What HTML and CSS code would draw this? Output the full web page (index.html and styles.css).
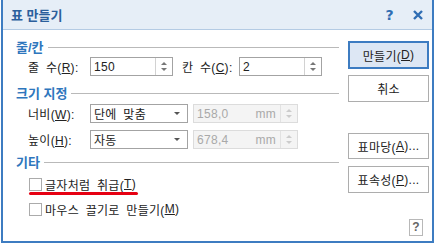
FILE: index.html
```html
<!DOCTYPE html>
<html>
<head>
    <title>표 만들기</title>
    <link rel="stylesheet" href="styles.css">
</head>
<body>
    <div class="dialog">
        <div class="titlebar">
            <span class="title">표 만들기</span>
            <span class="tb-help">?</span>
            <span class="tb-close">
                <svg width="10" height="10" viewBox="0 0 10 10"><path d="M1 1L9 9M9 1L1 9" stroke="#2f6db3" stroke-width="2.4"/></svg>
            </span>
        </div>
        <div class="content">
            <div class="form">
                <div class="sec" id="sec1"><span>줄/칸</span><i></i></div>
                <div class="row" id="row1">
                    <label class="lbl w62">줄 수(<u>R</u>):</label>
                    <div class="spin w83"><span class="val">150</span><span class="arrows"></span></div>
                    <label class="lbl w57 ml9">칸 수(<u>C</u>):</label>
                    <div class="spin w83"><span class="val">2</span><span class="arrows"></span></div>
                </div>

                <div class="sec" id="sec2"><span>크기 지정</span><i></i></div>
                <div class="row" id="row2">
                    <label class="lbl w62">너비(<u>W</u>):</label>
                    <div class="select"><span class="val">단에 맞춤</span><span class="caret"></span></div>
                    <div class="spin off"><span class="val">158,0</span><span class="unit">mm</span><span class="arrows"></span></div>
                </div>
                <div class="row" id="row3">
                    <label class="lbl w62">높이(<u>H</u>):</label>
                    <div class="select"><span class="val">자동</span><span class="caret"></span></div>
                    <div class="spin off"><span class="val">678,4</span><span class="unit">mm</span><span class="arrows"></span></div>
                </div>

                <div class="sec" id="sec3"><span>기타</span><i></i></div>
                <div class="check marked" id="chk1"><span class="box"></span>글자처럼 취급(<u>T</u>)</div>
                <div class="check" id="chk2"><span class="box"></span>마우스 끌기로 만들기(<u>M</u>)</div>
            </div>
            <div class="side">
                <div class="btn default" id="b1">만들기(<u>D</u>)</div>
                <div class="btn" id="b2">취소</div>
                <div class="btn" id="b3">표마당(<u>A</u>)...</div>
                <div class="btn" id="b4">표속성(<u>P</u>)...</div>
                <div class="help">?</div>
            </div>
        </div>
    </div>
</body>
</html>
```

FILE: styles.css
```css
body {
    margin: 0;
    width: 440px;
    height: 245px;
    background: #fff;
    font-family: "Liberation Sans", "Noto Sans CJK KR", sans-serif;
    font-size: 12px;
    letter-spacing: 0.3px;
    word-spacing: 3px;
    color: #222;
    overflow: hidden;
}

u {
    text-decoration: underline;
    text-underline-offset: 1px;
}

.dialog {
    margin-left: 1px;
    width: 429px;
    height: 241px;
    border: 2px solid #3d7cc1;
    border-top: none;
    display: flex;
    flex-direction: column;
}

.titlebar {
    height: 29px;
    background: #e6eef7;
    border-bottom: 1px solid #b4cbe4;
    display: flex;
    align-items: center;
}
.title {
    margin-left: 8px;
    font-size: 13px;
    font-weight: bold;
    letter-spacing: 0;
    word-spacing: 0;
    color: #2b5f9c;
    flex: 1;
}
.tb-help {
    font-family: "DejaVu Sans", sans-serif;
    font-weight: bold;
    font-size: 14px;
    color: #2f6db3;
    margin-right: 19px;
}
.tb-close {
    display: flex;
    margin-right: 9px;
}

.content {
    display: flex;
    flex: 1;
}

.form {
    width: 336px;
}

/* section header with rule */
.sec {
    height: 14px;
    display: flex;
    align-items: center;
    padding-left: 13px;
    color: #2e76bd;
    font-size: 13px;
    font-weight: bold;
    letter-spacing: 0;
    word-spacing: 0;
}
.sec i {
    flex: 1;
    height: 1px;
    background: #b9b9b9;
    margin-left: 4px;
    margin-top: 2px;
}
#sec1 { margin-top: 9px; }
#sec2 { margin-top: 9px; }
#sec3 { margin-top: 5px; }

.row {
    height: 19px;
    display: flex;
    align-items: center;
    padding-left: 25px;
}
#row1 { margin-top: 4px; }
#row2 { margin-top: 5px; }
#row3 { margin-top: 7px; }

.lbl { flex: none; }
.w62 { width: 62px; }
.w57 { width: 57px; }
.ml9 { margin-left: 9px; }
.w83 { width: 83px; }

.spin, .select {
    box-sizing: border-box;
    height: 19px;
    border: 1px solid #a3a3a3;
    display: flex;
    align-items: center;
    background: #fff;
}
.spin .val, .select .val {
    flex: 1;
    padding-left: 3px;
}
.arrows {
    width: 16px;
    height: 100%;
    border-left: 1px solid #d2d2d2;
    position: relative;
}
.arrows::before, .arrows::after {
    content: "";
    position: absolute;
    left: 5px;
    border-left: 3px solid transparent;
    border-right: 3px solid transparent;
}
.arrows::before {
    top: 4px;
    border-bottom: 3px solid #777;
}
.arrows::after {
    bottom: 4px;
    border-top: 3px solid #777;
}

.select {
    width: 98px;
}
.caret {
    width: 0;
    height: 0;
    margin-right: 7px;
    border-left: 3px solid transparent;
    border-right: 3px solid transparent;
    border-top: 3px solid #555;
}

.spin.off {
    width: 105px;
    margin-left: 5px;
    border-color: #dcdcdc;
    background: #f4f4f4;
    color: #a9a9a9;
}
.spin.off .unit {
    margin-right: 4px;
}
.spin.off .arrows {
    border-left-color: #e2e2e2;
}
.spin.off .arrows::before { border-bottom-color: #ccc; }
.spin.off .arrows::after { border-top-color: #ccc; }

.check {
    height: 14px;
    display: flex;
    align-items: center;
    padding-left: 26px;
    position: relative;
}
.check .box {
    box-sizing: border-box;
    width: 13px;
    height: 13px;
    border: 1px solid #ababab;
    margin-right: 3px;
}
#chk1 { margin-top: 9px; }
#chk2 { margin-top: 11px; }

/* red marker under the first option */
.check.marked::after {
    content: "";
    position: absolute;
    left: 26px;
    top: 15px;
    width: 109px;
    height: 3px;
    border-radius: 2px;
    background: #e60012;
}

.side {
    width: 81px;
    margin-left: 9px;
    display: flex;
    flex-direction: column;
}
.btn {
    box-sizing: border-box;
    height: 27px;
    border: 1px solid #adadad;
    display: flex;
    align-items: center;
    justify-content: center;
    background: #fff;
}
.btn.default {
    height: 28px;
    border: 2px solid #3d7cc1;
    background: #dde7f4;
}
#b1 { margin-top: 11px; }
#b2 { margin-top: 6px; }
#b3 { margin-top: 31px; height: 26px; }
#b4 { margin-top: 7px; }

.help {
    box-sizing: border-box;
    width: 14px;
    height: 17px;
    margin-top: 26px;
    margin-left: 61px;
    border: 1px solid #b8b8b8;
    color: #666;
    font-weight: bold;
    font-size: 12px;
    text-align: center;
    line-height: 15px;
}
```
